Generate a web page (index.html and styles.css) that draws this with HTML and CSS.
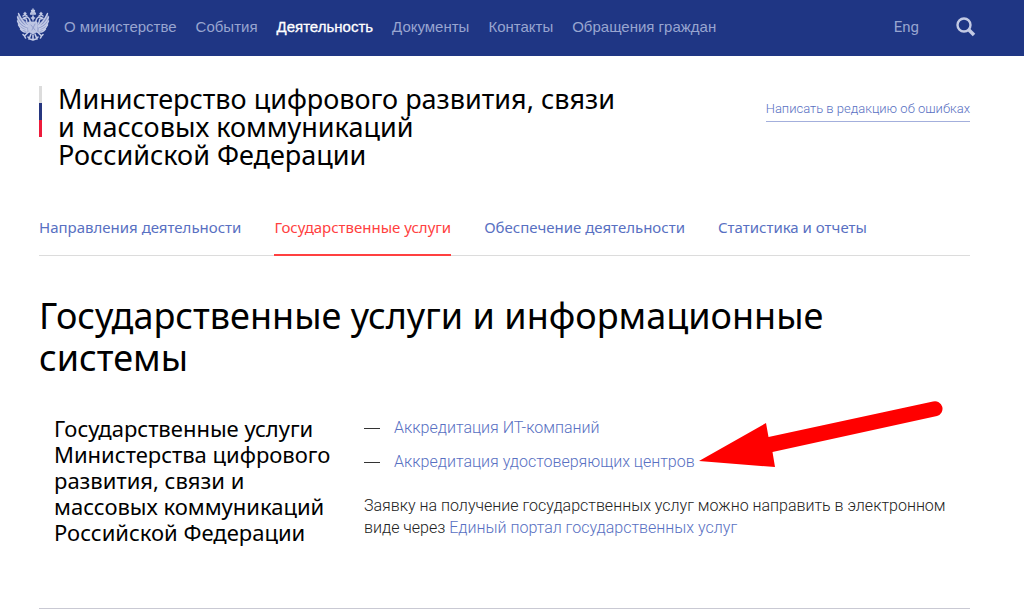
FILE: index.html
```html
<!DOCTYPE html>
<html lang="ru">
<head>
<meta charset="utf-8">
<meta name="viewport" content="width=device-width, initial-scale=1">
<title>Государственные услуги и информационные системы</title>
<link rel="stylesheet" href="styles.css">
</head>
<body>
<header class="topbar">
  <a class="emblem" href="#" aria-label="Главная">
    <svg viewBox="0 0 34 34" width="34" height="34" fill="none" stroke="#c3cbe6" stroke-linecap="round" stroke-linejoin="round">
      <path d="M2.500 5L1 10l1 7 3 5 6 2.500 2 .5h8l2-.5 6-2.500 3-5 1-7-1.500-5-3.500 6-5.500 5h-9L6 11z" fill="#8593c6" stroke="none"/>
      <path d="M17 1v4M15.500 2.500h3M14.500 6l1-2h3l1 2zM9 7V4.500M8 5.500h2M25 7V4.500M24 5.500h2" stroke-width="1.300"/>
      <path d="M7 8l2-1.500L11 8M23 8l2-1.500L27 8" stroke-width="1.500"/>
      <path d="M14.500 15c-.5-3-1-6-4-6-1.500 0-2 1-3.500 1.500l3 .5c1 1 0 3 2 5M19.500 15c.5-3 1-6 4-6 1.500 0 2 1 3.500 1.500l-3 .5c-1 1 0 3-2 5" stroke-width="1.500"/>
      <path d="M12 18C7 15 5 11 2.500 5.500M11.500 19C6 17 3 13 1.500 9M11 21C6 19.500 3 17 1.500 13M11 22.500C7 22 4 20 2.500 17M11 24c-3 .5-5-1-6.500-3" stroke-width="1.400"/>
      <path d="M22 18c5-3 7-7 9.500-12.500M22.500 19C28 17 31 13 32.500 9M23 21c5-1.500 8-4 9.500-8M23 22.500c4-.5 7-2.500 8.500-5.500M23 24c3 .5 5-1 6.500-3" stroke-width="1.400"/>
      <path d="M13 14h8v9l-4 3-4-3z" fill="#bcc5e3" stroke-width="1"/>
      <path d="M17 8v4M15.500 10h3M12.500 24l-4 4M7 26.500l1.500 1.500 1 2M21.500 24l4 4M27 26.500L25.500 28l-1 2M15 26l-2 5M17 27v5M19 26l2 5M12 29l2 2 3 1 3-1 2-2" stroke-width="1.600"/>
      <path d="M15 17l4 5M19 16l-3 6" stroke="#7f8dc0" stroke-width=".7"/>
    </svg>
  </a>
  <nav class="mainnav" aria-label="Основное меню">
    <a href="#">О министерстве</a>
    <a href="#">События</a>
    <a class="current" href="#">Деятельность</a>
    <a href="#">Документы</a>
    <a href="#">Контакты</a>
    <a href="#">Обращения граждан</a>
  </nav>
  <a class="lang" href="#">Eng</a>
  <button class="search" type="button" aria-label="Поиск">
    <svg viewBox="0 0 20 20" width="20" height="20" fill="none" stroke="#c3cae4">
      <circle cx="8" cy="8" r="6.500" stroke-width="2.400"/>
      <path d="M12.500 12.500l5.500 5.500" stroke-width="3.600"/>
    </svg>
  </button>
</header>
<main class="page">
  <div class="masthead">
    <div class="brand">
      <span class="flag"></span>
      <a class="ministry" href="#">Министерство цифрового развития, связи<br>и массовых коммуникаций<br>Российской Федерации</a>
    </div>
    <a class="feedback" href="#">Написать в редакцию об ошибках</a>
  </div>
  <nav class="tabs" aria-label="Деятельность">
    <a href="#">Направления деятельности</a>
    <a class="active" href="#">Государственные услуги</a>
    <a href="#">Обеспечение деятельности</a>
    <a href="#">Статистика и отчеты</a>
  </nav>
  <h1>Государственные услуги и информационные системы</h1>
  <section class="services">
    <h2>Государственные услуги Министерства цифрового развития, связи и массовых коммуникаций Российской Федерации</h2>
    <div class="details">
      <ul>
        <li><a href="#">Аккредитация ИТ-компаний</a></li>
        <li><a href="#">Аккредитация удостоверяющих центров</a>
          <svg class="pointer" viewBox="0 0 246 70" width="246" height="70" aria-hidden="true">
            <path d="M1 62L68 24l2.500 14L235 2.500a7.400 7.400 0 0 1 4 14.500L74.500 53l2.500 15z" fill="#f00"/>
          </svg>
        </li>
      </ul>
      <p>Заявку на получение государственных услуг можно направить в электронном виде через <a href="#">Единый портал государственных услуг</a></p>
    </div>
  </section>
</main>
</body>
</html>
```
FILE: styles.css
```css
* { box-sizing: border-box; }

body {
  margin: 0;
  background: #fff;
  color: #000;
  font-family: Roboto, "Liberation Sans", sans-serif;
}

a { color: #5870c2; text-decoration: none; }

.topbar {
  display: flex;
  align-items: center;
  height: 56px;
  padding: 0 48px 2px 16px;
  background: #1f3684;
  font: 15px/20px "Liberation Sans", Arial, sans-serif;
}
.topbar a { color: #98a5d0; }
.emblem { display: flex; margin: 0 14px 4px 0; }
.mainnav { display: flex; gap: 19px; white-space: nowrap; }
.mainnav .current { color: #fff; -webkit-text-stroke: 0.3px #fff; }
.topbar .lang { margin-left: auto; font-family: Roboto, sans-serif; }
.search {
  display: flex;
  margin-left: 37px;
  padding: 0;
  border: 0;
  background: none;
  cursor: pointer;
}

.page { padding: 29px 54px 0 39px; }

.masthead {
  display: flex;
  justify-content: space-between;
  align-items: flex-start;
}
.brand { display: flex; gap: 16px; }
.flag {
  width: 3px;
  height: 51px;
  margin-top: 1px;
  background: linear-gradient(#dcdcdc 0 17px, #27367f 17px 34px, #ed1b3b 34px);
}
.ministry {
  color: #000;
  font: 27px/28px "Noto Sans", sans-serif;
}
.feedback {
  margin-top: 16px;
  padding-bottom: 4px;
  border-bottom: 1px solid #a3afdc;
  font-size: 13px;
  font-weight: 300;
  line-height: 16px;
}

.tabs {
  display: flex;
  gap: 33px;
  margin-top: 46px;
  border-bottom: 1px solid #dcdcdc;
  font: 15px/24px "Noto Sans", sans-serif;
  white-space: nowrap;
}
.tabs a { padding-bottom: 15px; border-bottom: 2px solid transparent; margin-bottom: -1px; }
.tabs .active { color: #ff4040; border-color: #ff4040; }

h1 {
  margin: 39px 0 0;
  font: 36px/42px "Noto Sans", sans-serif;
}

.services {
  display: grid;
  grid-template-columns: 280px 1fr;
  gap: 30px;
  margin-top: 36px;
  padding: 0 15px 63px;
  border-bottom: 1px solid #c9c9d3;
}
h2 {
  margin: 0;
  font: 22px/26px "Noto Sans", sans-serif;
}
.details { padding-top: 2px; font-size: 16px; font-weight: 300; line-height: 22px; }
ul { margin: 0; padding: 0; list-style: none; }
li {
  position: relative;
  display: flex;
  align-items: center;
  margin-bottom: 12px;
}
li::before {
  content: "";
  width: 16px;
  height: 1px;
  margin-right: 14px;
  background: #333;
}
.pointer { position: absolute; left: 334px; top: -52px; }
.details p { margin: 22px 0 0; color: #222; }
```
